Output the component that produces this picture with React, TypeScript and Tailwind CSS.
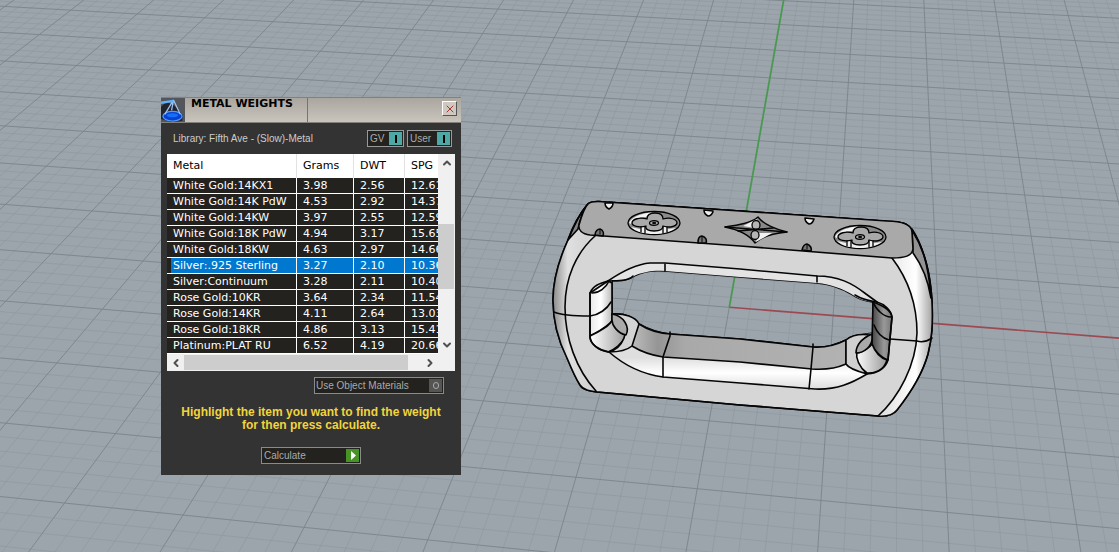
import { useState } from "react";
import { ChevronDown, ChevronLeft, ChevronRight, ChevronUp, X } from "lucide-react";
import { clsx } from "clsx";

const metals = [
  { name: "White Gold:14KX1", grams: "3.98", dwt: "2.56", spg: "12.61" },
  { name: "White Gold:14K PdW", grams: "4.53", dwt: "2.92", spg: "14.37" },
  { name: "White Gold:14KW", grams: "3.97", dwt: "2.55", spg: "12.59" },
  { name: "White Gold:18K PdW", grams: "4.94", dwt: "3.17", spg: "15.65" },
  { name: "White Gold:18KW", grams: "4.63", dwt: "2.97", spg: "14.66" },
  { name: "Silver:.925 Sterling", grams: "3.27", dwt: "2.10", spg: "10.36" },
  { name: "Silver:Continuum", grams: "3.28", dwt: "2.11", spg: "10.40" },
  { name: "Rose Gold:10KR", grams: "3.64", dwt: "2.34", spg: "11.54" },
  { name: "Rose Gold:14KR", grams: "4.11", dwt: "2.64", spg: "13.03" },
  { name: "Rose Gold:18KR", grams: "4.86", dwt: "3.13", spg: "15.41" },
  { name: "Platinum:PLAT RU", grams: "6.52", dwt: "4.19", spg: "20.66" },
];

// Perspective projection of a point on the construction plane
function project(i: number, j: number) {
  const k = 0.0541 * j;
  const w = 1 - 0.0088 * i + k;
  const x = (729.3 + 96.45 * i + 895 * k) / w;
  const y = (307.3 + 5.42 * i - 629 * k) / w;
  return `${x.toFixed(1)} ${y.toFixed(1)}`;
}

function gridPath(major: boolean) {
  let d = "";
  for (let n = -70; n <= 60; n++) {
    if ((n % 5 === 0) !== major || n === 0) continue;
    const v = n / 5;
    if (v >= -14 && v <= 7) d += `M${project(v, -7)}L${project(v, 12)}`;
    if (v >= -7 && v <= 12) d += `M${project(-14, v)}L${project(7, v)}`;
  }
  return d;
}

const minorGrid = gridPath(false);
const majorGrid = gridPath(true) + `M${project(0, -7)}L${project(0, 0)}M${project(-14, 0)}L${project(0, 0)}`;

const outline =
  "M588 204C582 211 574 223 568 240C558 262 553 280 553 300C553 322 559 342 567 358C572 370 576 379 580 385C583 390 590 391 597 392L740 405L878 416C888 417 893 415 897 410C912 391 923 372 928 354C932 338 933 325 932 300C930 272 925 251 912 230C908 224 905 223 897 222L740 211L606 202C597 201 591 201 588 204Z";

const through =
  "M612 280C624 281 630 279 634 276C642 272 654 270 665 271L740 277L817 283C831 284 843 289 853 295C860 300 867 301 873 302L873 333C862 335 853 334 846 340C836 345 825 348 813 347L740 339L670 334C658 333 648 329 639 324C632 315 622 313 612 314Z";

const opening =
  "M590 293C593 285 601 283 608 281C624 270 638 264 650 263L665 263L740 269L817 276C838 276 852 283 866 294L877 302C884 304 891 310 892 317L888 360C886 367 879 373 867 374C852 383 837 390 815 389L740 383L663 377C641 374 625 366 609 352C599 350 591 345 590 338Z";

function Flower({ x, y }: { x: number; y: number }) {
  return (
    <g transform={`translate(${x} ${y})`} stroke="#000" strokeWidth="1.3">
      <ellipse rx="26" ry="11.5" fill="#8a8a8a" />
      <path d="M-25 0C-22 -7 -10 -10 -2 -10.500L-8 -6C-16 -6 -20 -3 -23 1Z" fill="#f4f4f4" stroke="none" />
      <path d="M-23 4L-14 6L-12 3L12 3L14 6L22 5C16 9 8 11 0 11C-9 11 -18 9 -23 4Z" fill="#f0f0f0" stroke="none" />
      <path d="M-7 -4C-7 -8 -4 -10 1 -10C6 -10 9 -8 9 -4C16 -6 23 -4 23 0C22 4 15 5 9 3C9 6 6 8 0 8C-6 8 -9 6 -8 3C-15 5 -22 3 -22 0C-22 -4 -14 -6 -7 -4Z" fill="#a9a9a9" />
      <path d="M-13 4V9M-9 4V10M9 4V10M13 4V9" />
      <ellipse rx="4.5" ry="2.3" fill="#aaa" />
      <ellipse rx="1.5" ry="0.8" fill="#111" strokeWidth="1" />
    </g>
  );
}

function Ring() {
  return (
    <g fill="none" stroke="#050505" strokeWidth="1.6" strokeLinecap="round" strokeLinejoin="round">
      <path d={`${outline}${through}`} fillRule="evenodd" fill="#d6d6d6" />

      {/* Outer bevels */}
      <path d="M590 235C576 255 566 280 565 307C565 338 574 366 595 391C588 391 583 390 580 385C567 360 553 334 553 300C553 276 561 255 568 240L579 228Z" fill="url(#leftBevel)" stroke="none" />
      <path d="M893 258C909 280 917 307 917 333C916 365 898 397 878 416C888 417 893 415 897 410C920 380 933 352 932 310C931 283 925 255 912 232V253C907 258 900 258 893 258Z" fill="url(#rightBevel)" stroke="none" />
      <path d="M588 204C583 209 576 221 568 240L578 229C580 219 584 209 588 204Z" fill="#858585" />
      <path d="M912 229C922 244 929 268 931 298C928 280 922 265 913 253Z" fill="#939393" />
      <path d={outline} />
      <path d="M595 236C576 253 565 278 565 307C565 338 576 369 596 391M892 258C908 279 917 305 917 333C916 365 899 397 878 416" />

      {/* Top face */}
      <path d="M588 204C591 201 597 201 606 202L740 211L887 221C902 221 912 225 912 232L913 249C912 256 905 258 892 258L740 246L590 235C582 234 578 230 579 225C581 218 584 208 588 204Z" fill="#a9a9a9" />

      {/* Opening with its inner walls */}
      <path d={`${opening}${through}`} fillRule="evenodd" fill="url(#innerBevel)" stroke="none" />
      <path d="M639 324C648 330 658 333 670 334L740 339L813 347C826 348 838 344 846 340V364C837 368 826 370 812 369L740 362L663 357C650 355 640 351 632 346C632 338 636 329 639 324Z" fill="url(#floor)" />
      <path d="M590 293L608 281L612 283V321C606 328 597 332 590 336Z" fill="url(#leftWall)" />
      <path d="M590 336C599 332 611 325 612 320C617 331 622 335 627 335C622 344 614 350 608 352C597 350 590 343 590 336Z" fill="url(#corner)" />
      <path d="M612 314C624 313 636 317 639 324L632 346C626 351 616 352 609 352C622 348 632 331 620 318Z" fill="#d4d4d4" />
      <path d="M612 314C624 316 630 327 626 335C617 333 612 325 612 320Z" fill="#aaa" />
      <path d="M873 302C884 306 891 310 892 317L888 360C879 357 873 348 872 344L873 302Z" fill="url(#rightWall)" />
      <path d="M872 344C875 352 880 358 887 360C884 370 876 374 867 373C859 367 855 360 856 353C864 352 870 347 872 344Z" fill="url(#corner)" />
      <path d="M846 340C852 335 862 334 870 335C856 341 850 358 867 374C860 372 849 369 846 364Z" fill="#d0d0d0" />
      <path d="M872 334C861 339 856 346 856 353C865 353 872 345 872 339Z" fill="#aaa" />
      <path d={opening} />
      <path d="M608 281C618 281 628 281 633 276M592 293C599 293 606 288 609 281M590 316C599 315 607 309 611 302M873 302C876 310 884 317 891 317M874 325C877 333 882 338 889 340M855 295C863 300 869 301 877 302" />
      <path d="M670 332V336L663 357M663 357V377M813 344V347L811 369L809 389M665 264V271M817 276V282" />
      <path d="M554 312C561 315 573 316 590 316M890 339L917 341C923 343 929 340 932 338" />

      {/* Engraving */}
      <Flower x={654} y={223} />
      <Flower x={860} y={237} />
      <g fill="#b5b5b5" strokeWidth="1.3">
        <path d="M725 227C739 225 751 223 758 217C764 225 775 229 787 232C775 233 762 237 755 243C750 236 740 230 725 227Z" fill="#888" />
        <path d="M743 226L757 219L755 228ZM758 233L772 233L756 242Z" fill="#f2f2f2" stroke="none" />
        <ellipse cx="756" cy="225" rx="4" ry="4.5" />
        <ellipse cx="755" cy="235" rx="4" ry="4.5" />
        <path d="M725 227L787 232M738 231L773 228" />
      </g>
      <g fill="#eee">
        <path d="M605 203H613C613 206 611 208 609 209C607 208 605 206 605 203ZM704 210L713 211C713 214 710 216 708 216C706 215 704 213 704 210ZM805 218L814 219C813 222 811 224 809 224C807 223 805 221 805 218Z" />
        <path d="M595 235C595 231 598 229 600 229C603 230 604 233 603 236ZM698 243C698 238 700 236 702 236C706 237 707 240 706 243ZM802 250C803 246 805 244 807 244C810 245 812 248 811 251Z" fill="#777" />
        <path d="M600 230V234M702 237V242M807 245V249" strokeWidth="1" />
      </g>
    </g>
  );
}

function Viewport() {
  return (
    <svg
      className="absolute inset-0 h-full w-full"
      viewBox="0 0 1119 552"
      preserveAspectRatio="xMinYMin slice"
      role="img"
      aria-label="Perspective viewport"
    >
      <defs>
        <linearGradient id="leftBevel">
          <stop offset="0" stopColor="#8a8a8a" />
          <stop offset="0.35" stopColor="#e0e0e0" />
          <stop offset="1" stopColor="#cfcfcf" />
        </linearGradient>
        <linearGradient id="rightBevel">
          <stop offset="0" stopColor="#ddd" />
          <stop offset="0.7" stopColor="#fff" />
          <stop offset="1" stopColor="#a5a5a5" />
        </linearGradient>
        <linearGradient id="innerBevel" x2="0" y2="1">
          <stop offset="0" stopColor="#e4e4e4" />
          <stop offset="0.75" stopColor="#dedede" />
          <stop offset="0.87" stopColor="#fff" />
          <stop offset="1" stopColor="#ddd" />
        </linearGradient>
        <linearGradient id="floor">
          <stop offset="0" stopColor="#bdbdbd" />
          <stop offset="0.12" stopColor="#959595" />
          <stop offset="0.25" stopColor="#a9a9a9" />
          <stop offset="1" stopColor="#b2b2b2" />
        </linearGradient>
        <linearGradient id="leftWall">
          <stop offset="0" stopColor="#e8e8e8" />
          <stop offset="0.5" stopColor="#fff" />
          <stop offset="1" stopColor="#bbb" />
        </linearGradient>
        <linearGradient id="rightWall">
          <stop offset="0" stopColor="#444" />
          <stop offset="0.6" stopColor="#999" />
          <stop offset="1" stopColor="#777" />
        </linearGradient>
        <linearGradient id="corner">
          <stop offset="0" stopColor="#fff" />
          <stop offset="1" stopColor="#999" />
        </linearGradient>
      </defs>
      <g fill="none">
        <path d={minorGrid} stroke="#8c949b" strokeWidth="0.5" />
        <path d={majorGrid} stroke="#7c848a" strokeWidth="0.9" />
        <path d={`M${project(0, 0)}L${project(7, 0)}`} stroke="#9c4a52" strokeWidth="1.6" />
        <path d={`M${project(0, 0)}L${project(0, 12)}`} stroke="#4a9951" strokeWidth="1.8" />
      </g>
      <Ring />
    </svg>
  );
}

function ScaleLogo() {
  return (
    <svg className="h-full w-6" viewBox="0 0 25 25" preserveAspectRatio="none" fill="none" aria-hidden="true">
      <rect width="25" height="25" fill="#54565c" />
      <path d="M0 9L6 4L14 8L23 18L22 24L10 25L0 22Z" fill="#23252c" />
      <ellipse cx="12" cy="19" rx="10" ry="5" fill="#0b3fd0" stroke="#4f9bff" strokeWidth="1.3" />
      <ellipse cx="12" cy="18" rx="6" ry="2" fill="#1670f5" />
      <path d="M13 2L4 17M13 2L20 17M13 2L11 13" stroke="#9cc4f5" strokeWidth="1.3" />
      <path d="M0 5L13 3" stroke="#5fb0ff" strokeWidth="2.5" />
    </svg>
  );
}

interface ToggleButtonProps {
  label: string;
  on: boolean;
  onClick: () => void;
  className: string;
}

function ToggleButton({ label, on, onClick, className }: ToggleButtonProps) {
  return (
    <button
      type="button"
      aria-pressed={on}
      onClick={onClick}
      className={clsx(
        "flex h-[17px] items-center justify-between border border-[#999] bg-[#23221f] pr-px pl-0.5 text-[10px] text-[#aaa]",
        className
      )}
    >
      {label}
      <span className={clsx("flex h-[13px] w-[13px] items-center justify-center", on ? "bg-[#4da9a6]" : "bg-[#555]")}>
        <span className="h-2 w-0.5 bg-black" />
      </span>
    </button>
  );
}

function MetalTable() {
  const [selected, setSelected] = useState("Silver:.925 Sterling");

  return (
    <div className="bg-[#f0f0f0]">
      <div className="flex">
        <div className="min-w-0 flex-1 overflow-hidden font-['DejaVu_Sans',sans-serif] text-[11px]">
          <table className="w-[300px] table-fixed border-separate border-spacing-0 text-left">
            <colgroup>
              <col className="w-[130px]" />
              <col className="w-[57px]" />
              <col className="w-[51px]" />
              <col />
            </colgroup>
            <thead>
              <tr className="h-6 bg-white text-black">
                {["Metal", "Grams", "DWT", "SPG"].map((heading) => (
                  <th key={heading} scope="col" className="border-r border-[#e2e2e2] py-0 pl-1.5 font-normal">
                    {heading}
                  </th>
                ))}
              </tr>
            </thead>
            <tbody>
              {metals.map((metal) => (
                <tr
                  key={metal.name}
                  onClick={() => setSelected(metal.name)}
                  aria-selected={metal.name === selected}
                  className={clsx("text-white", metal.name === selected ? "bg-[#0078d0]" : "bg-[#23221f]")}
                >
                  <td className={clsx("border-r border-b border-white p-0", metal.name === selected && "bg-[#23221f]")}>
                    <div className={clsx("ml-1 h-[15px] pl-0.5 leading-[15px]", metal.name === selected && "bg-[#0078d0]")}>
                      {metal.name}
                    </div>
                  </td>
                  {[metal.grams, metal.dwt, metal.spg].map((value) => (
                    <td key={value} className="border-r border-b border-white p-0 pl-1.5 leading-[15px]">
                      {value}
                    </td>
                  ))}
                </tr>
              ))}
            </tbody>
          </table>
        </div>

        {/* Vertical scrollbar */}
        <div className="flex w-[17px] flex-col items-center text-[#505050]">
          <button type="button" aria-label="Scroll up" className="flex h-[18px] items-center">
            <ChevronUp className="h-3 w-3" strokeWidth={4} />
          </button>
          <div className="flex w-full flex-1 flex-col">
            <div className="flex-[52]" />
            <div className="mr-px flex-[66] bg-[#cdcdcd]" />
            <div className="flex-[47]" />
          </div>
          <button type="button" aria-label="Scroll down" className="flex h-[18px] items-center">
            <ChevronDown className="h-3 w-3" strokeWidth={4} />
          </button>
        </div>
      </div>

      {/* Horizontal scrollbar */}
      <div className="flex h-[17px] items-center pr-[17px] text-[#505050]">
        <button type="button" aria-label="Scroll left" className="flex w-[17px] justify-center">
          <ChevronLeft className="h-3 w-3" strokeWidth={4} />
        </button>
        <div className="flex h-[15px] flex-1">
          <div className="flex-[224] bg-[#cdcdcd]" />
          <div className="flex-[13]" />
        </div>
        <button type="button" aria-label="Scroll right" className="flex w-[17px] justify-center">
          <ChevronRight className="h-3 w-3" strokeWidth={4} />
        </button>
      </div>
    </div>
  );
}

function MetalWeights() {
  const [gv, setGv] = useState(true);
  const [user, setUser] = useState(true);
  const [objectMaterials, setObjectMaterials] = useState(false);

  return (
    <section
      aria-label="Metal Weights"
      className="absolute left-[161px] top-[97px] w-[300px] bg-[#333] pb-[11px] font-['Liberation_Sans',Arial,sans-serif]"
    >
      <header className="flex h-[26px] items-start border-b border-t border-[#85817a] bg-linear-to-b from-[#aaa59e] to-[#c9c5bd]">
        <ScaleLogo />
        <h1 className="h-full w-[123px] border-r border-[#77736d] pl-1.5 font-['DejaVu_Sans',sans-serif] text-[11px] leading-3 font-bold text-black">
          METAL WEIGHTS
        </h1>
        <button
          type="button"
          aria-label="Close"
          className="mt-[3px] mr-1 ml-auto flex h-[15px] w-[15px] items-center justify-center border border-t-white border-r-[#555] border-b-[#555] border-l-white bg-[#d0c9c0] text-[#a33]"
        >
          <X className="h-3 w-3" strokeWidth={2} />
        </button>
      </header>

      <div className="px-1.5">
        <div className="flex h-[31px] items-center gap-[3px] pr-[3px] pl-1.5">
          <p className="mr-auto text-[10px] text-[#ccc]">Library: Fifth Ave - (Slow)-Metal</p>
          <ToggleButton label="GV" on={gv} onClick={() => setGv(!gv)} className="w-[37px]" />
          <ToggleButton label="User" on={user} onClick={() => setUser(!user)} className="w-[45px]" />
        </div>

        <MetalTable />

        <div className="mt-1.5 flex justify-end pr-[11px]">
          <button
            type="button"
            aria-pressed={objectMaterials}
            onClick={() => setObjectMaterials(!objectMaterials)}
            className="flex h-[17px] w-[130px] items-center justify-between border border-[#8a8a8a] bg-[#23221f] pr-px pl-px text-[10px] text-[#aaa]"
          >
            Use Object Materials
            <span className="flex h-[13px] w-[13px] items-center justify-center bg-[#555]">
              <span className="h-[7px] w-[6px] rounded-full border border-[#aaa]" />
            </span>
          </button>
        </div>

        <p className="mt-3 text-center text-[12px] leading-[13px] font-bold whitespace-nowrap text-[#f2d43c]">
          Highlight the item you want to find the weight
          <br />
          for then press calculate.
        </p>

        <div className="mt-[15px] flex justify-center">
          <button
            type="button"
            className="flex h-[17px] w-[100px] items-center justify-between border border-[#8a8a8a] bg-[#23221f] pr-px pl-0.5 text-[10px] text-[#aaa]"
          >
            Calculate
            <span className="flex h-[13px] w-[13px] items-center justify-center bg-[#459426]">
              <svg className="h-[9px] w-[6px]" viewBox="0 0 6 9" aria-hidden="true">
                <path d="M1 0L6 4.5L1 9Z" fill="#fff" />
              </svg>
            </span>
          </button>
        </div>
      </div>
    </section>
  );
}

export default function App() {
  return (
    <main className="relative min-h-screen overflow-hidden bg-[#9ca4ac]">
      <Viewport />
      <MetalWeights />
    </main>
  );
}
